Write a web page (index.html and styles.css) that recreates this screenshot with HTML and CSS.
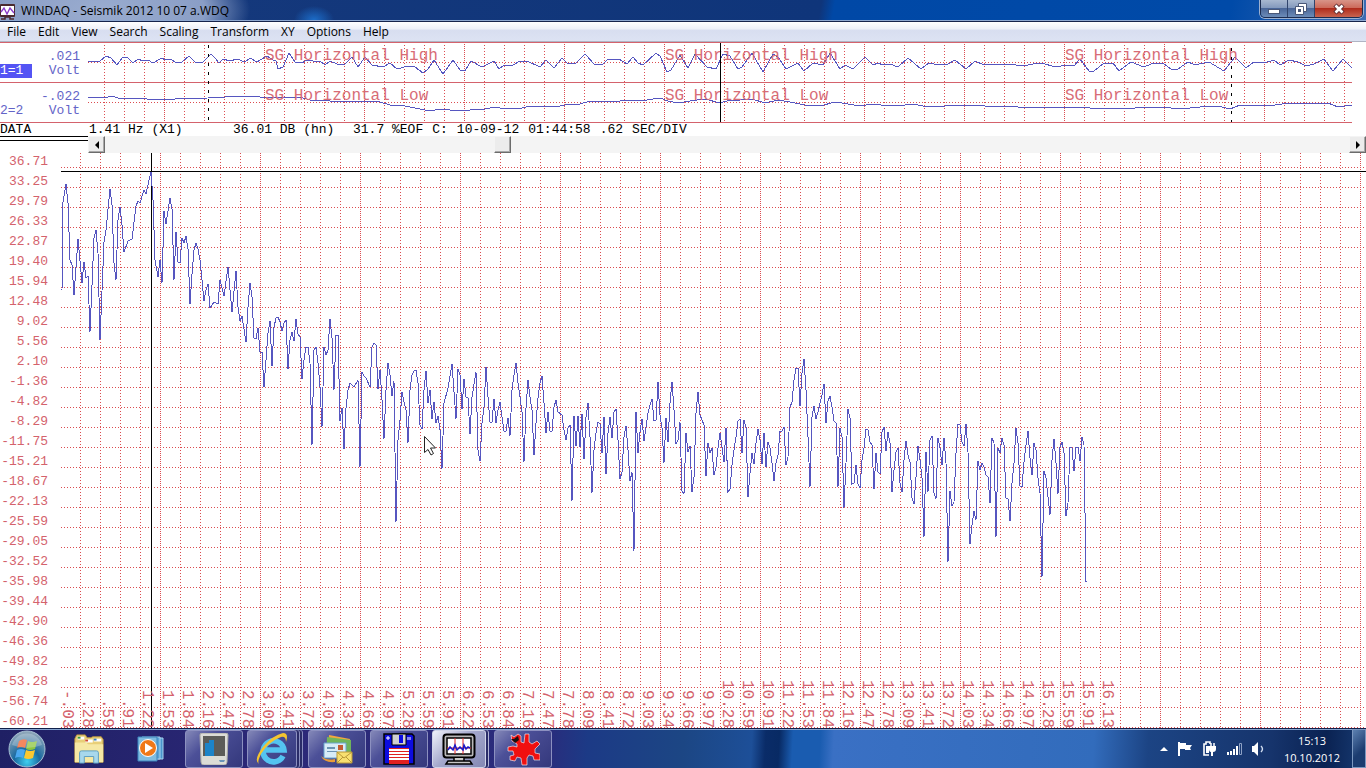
FILE: index.html
```
<!DOCTYPE html>
<html lang="en">
<head>
    <meta charset="UTF-8">
    <meta name="viewport" content="width=device-width, initial-scale=1.0">
    <title>WINDAQ - Seismik 2012 10 07 a.WDQ</title>
    <link rel="stylesheet" href="styles.css">
</head>
<body>

    <header class="title-bar">
        <svg class="app-icon" width="16" height="18" viewBox="0 0 16 18" aria-hidden="true">
            <rect x="0" y="2" width="15" height="13" rx="1" fill="#4a2a30"/>
            <rect x="1" y="4" width="13" height="9" fill="#fff"/>
            <path d="M1 10l3-4 3 6 3-6 4 5" fill="none" stroke="#8a3cc8" stroke-width="1.4"/>
            <path d="M1 17h4v-2h5v2h4" fill="none" stroke="#4a2a30" stroke-width="1.5"/>
        </svg>
        <h1 class="title-text">WINDAQ - Seismik 2012 10 07 a.WDQ</h1>
        <div class="window-controls">
            <button class="control" aria-label="Minimize">
                <svg width="12" height="12" viewBox="0 0 12 12"><rect x="0.5" y="6.500" width="11" height="4" fill="#fff" stroke="#4a5878"/></svg>
            </button>
            <button class="control" aria-label="Restore">
                <svg width="12" height="12" viewBox="0 0 12 12">
                    <path d="M3.500 .5h8v8h-8z" fill="#fff" stroke="#4a5878"/>
                    <path d="M.5 3.500h8v8h-8z" fill="#fff" stroke="#4a5878"/>
                    <rect x="3.500" y="6.500" width="2" height="2" fill="#4a5878" stroke="#4a5878"/>
                </svg>
            </button>
            <button class="control close" aria-label="Close">
                <svg width="12" height="12" viewBox="0 0 12 12">
                    <path d="M2 2l8 8M10 2l-8 8" stroke="#5a2a30" stroke-width="4.500"/>
                    <path d="M2.500 2.500l7 7M9.500 2.500l-7 7" stroke="#fff" stroke-width="2.600"/>
                </svg>
            </button>
        </div>
    </header>

    <nav class="menu-bar">
        <button>File</button>
        <button>Edit</button>
        <button>View</button>
        <button>Search</button>
        <button>Scaling</button>
        <button>Transform</button>
        <button>XY</button>
        <button>Options</button>
        <button>Help</button>
    </nav>

    <section class="strip">
        <div class="channels">
            <div class="channel">
                <span class="channel-id active">1=1</span>
                <span class="channel-value">.021<br>Volt</span>
            </div>
            <div class="channel">
                <span class="channel-id">2=2</span>
                <span class="channel-value">-.022<br>Volt</span>
            </div>
        </div>
        <svg class="strip-chart" role="img" aria-label="Waveforms of both channels">
            <defs>
                <pattern id="stripCols" x="64" y="42" width="100" height="12" patternUnits="userSpaceOnUse">
                    <path class="grid-major" d="M.5 0v12"/>
                    <path class="grid-minor" d="M20.500 0v12M40.500 0v12M60.500 0v12M80.500 0v12"/>
                </pattern>
                <pattern id="stripRows" x="88" y="62" width="60" height="40" patternUnits="userSpaceOnUse">
                    <path class="grid-minor" d="M0 .5h60"/>
                </pattern>
            </defs>
            <g transform="translate(-88 -42)">
                <rect x="88" y="42" width="100%" height="80" fill="url(#stripCols)"/>
                <rect x="88" y="42" width="100%" height="80" fill="url(#stripRows)"/>
                <g fill="#d4626c">
                    <rect x="88" y="42" width="100%" height="1"/>
                    <rect x="88" y="82" width="100%" height="1"/>
                    <rect x="88" y="122" width="100%" height="1"/>
                </g>
                <g class="trace">
                    <polyline points="88,61 100,61 106,56 111,58 117,65 123,57 128,58 133,63 138,59 143,61 148,60 153,63 162,58 165,60 170,59 177,63 182,62 189,56 195,62 203,62 211,54 215,58 219,63 223,59 230,61 237,59 245,62 250,58 257,62 267,56 273,60 276,61 278,69 283,67 289,53 295,62 302,63 307,60 313,61 320,61 325,65 330,61 337,64 345,64 352,57 358,67 365,57 372,65 383,67 390,63 397,69 408,66 415,67 423,73 428,69 434,60 443,74 453,60 460,70 465,71 471,61 482,67 488,64 494,61 499,69 504,65 513,65 520,61 527,61 540,67 546,60 554,68 562,58 567,63 575,64 585,54 595,65 603,64 608,59 619,59 627,64 633,57 638,63 643,65 656,53 660,56 667,72 671,70 680,55 688,68 695,54 707,67 716,69 723,54 730,56 738,69 742,67 752,53 763,72 773,54 778,57 786,69 798,63 804,71 813,63 823,65 830,53 840,69 845,65 853,69 865,57 873,65 878,63 883,65 890,64 898,67 908,58 921,69 929,63 934,64 948,64 955,60 966,69 975,61 984,65 996,64 1009,64 1023,66 1033,64 1041,63 1056,67 1066,65 1074,66 1080,59 1089,71 1094,71 1104,63 1113,63 1119,71 1131,62 1144,67 1151,64 1163,63 1171,69 1178,69 1188,62 1193,64 1199,64 1209,62 1224,71 1235,57 1246,68 1254,62 1264,63 1274,60 1280,65 1289,60 1298,62 1306,66 1314,64 1324,59 1333,71 1343,59 1352,68"/>
                    <polyline points="88,97 108,97 112,96 118,98 135,98 158,100 175,99 208,98 225,97 240,96 260,97 275,97 290,97 300,97 310,100 330,101 365,101 380,102 390,105 400,105 410,107 425,110 435,110 445,109 455,111 470,110 485,109 495,107 500,108 522,108 530,106 540,107 560,106 565,105 580,104 590,101 605,102 620,101 630,100 640,101 660,98 668,101 678,103 690,101 705,99 720,103 730,100 740,100 752,99 765,103 778,100 790,102 805,105 820,106 835,102 848,104 860,106 872,104 890,106 905,105 913,104 928,107 945,106 960,105 985,106 1005,106 1030,108 1045,107 1065,108 1085,107 1095,109 1112,108 1125,109 1145,107 1162,107 1180,109 1200,107 1218,106 1230,109 1240,105 1255,106 1275,105 1290,103 1318,104 1328,103 1338,107 1352,105"/>
                </g>
                <g class="strip-label">
                    <text x="265" y="60">SG Horizontal High</text>
                    <text x="665" y="60">SG Horizontal High</text>
                    <text x="1065" y="60">SG Horizontal High</text>
                    <text x="265" y="100">SG Horizontal Low</text>
                    <text x="665" y="100">SG Horizontal Low</text>
                    <text x="1065" y="100">SG Horizontal Low</text>
                </g>
                <rect x="720" y="43" width="1" height="79" fill="#000"/>
                <path d="M208.500 45v77M1231.500 48v74" stroke="#000" stroke-dasharray="3 6"/>
            </g>
        </svg>
    </section>

    <section class="status-row">
        <span class="status-mode">DATA</span>
        <span class="status-frequency">1.41 Hz (X1)</span>
        <span class="status-level">36.01 DB (hn)</span>
        <span>31.7 %EOF</span>
        <span>C:</span>
        <span>10-09-12</span>
        <span>01:44:58</span>
        <span>.62</span>
        <span>SEC/DIV</span>
    </section>

    <section class="scroll-row">
        <div class="rule"></div>
        <button class="scroll-button" aria-label="Scroll left">
            <svg width="6" height="8" viewBox="0 0 6 8"><path d="M5 0v8L1 4z" fill="#000"/></svg>
        </button>
        <input class="scroll-track" type="range" min="0" max="100" step="0.1" value="31.7" aria-label="File position">
        <button class="scroll-button" aria-label="Scroll right">
            <svg width="6" height="8" viewBox="0 0 6 8"><path d="M1 0v8l4-4z" fill="#000"/></svg>
        </button>
    </section>

    <main class="spectrum">
        <ol class="y-scale">
            <li>36.71</li>
            <li>33.25</li>
            <li>29.79</li>
            <li>26.33</li>
            <li>22.87</li>
            <li>19.40</li>
            <li>15.94</li>
            <li>12.48</li>
            <li>9.02</li>
            <li>5.56</li>
            <li>2.10</li>
            <li>-1.36</li>
            <li>-4.82</li>
            <li>-8.29</li>
            <li>-11.75</li>
            <li>-15.21</li>
            <li>-18.67</li>
            <li>-22.13</li>
            <li>-25.59</li>
            <li>-29.05</li>
            <li>-32.52</li>
            <li>-35.98</li>
            <li>-39.44</li>
            <li>-42.90</li>
            <li>-46.36</li>
            <li>-49.82</li>
            <li>-53.28</li>
            <li>-56.74</li>
            <li>-60.21</li>
        </ol>
        <div class="plot">
            <svg class="plot-chart" role="img" aria-label="Frequency spectrum in decibels">
                <defs>
                    <pattern id="plotCols" x="60" y="153" width="100" height="12" patternUnits="userSpaceOnUse">
                        <path class="grid-major" d="M.5 0v12"/>
                        <path class="grid-minor" d="M20.500 0v12M40.500 0v12M60.500 0v12M80.500 0v12"/>
                    </pattern>
                    <pattern id="plotRows" x="61" y="167" width="60" height="20" patternUnits="userSpaceOnUse">
                        <path class="grid-minor" d="M0 .5h60"/>
                    </pattern>
                </defs>
                <g transform="translate(-61 -153)">
                    <rect x="61" y="153" width="100%" height="100%" fill="url(#plotCols)"/>
                    <rect x="61" y="153" width="100%" height="100%" fill="url(#plotRows)"/>
                    <rect x="61" y="171" width="100%" height="1" fill="#000"/>
                    <rect x="151" y="153" width="1" height="100%" fill="#000"/>
                    <g class="trace">
                        <polyline points="62,290 63,202 66,184 68,203 70,260 72,265 74,295 78,239 82,283 84,262 86,278 88,276 90,332 94,238 96,230 98,253 100,340 104,242 106,230 110,189 112,205 114,263 116,280 118,220 120,207 122,225 124,252 128,241 132,239 136,206 138,201 140,203 144,190 146,194 149,180 151,172 153,200 155,260 158,277 160,260 162,283 164,211 166,224 170,198 172,209 174,280 176,232 178,262 180,263 182,238 184,243 186,236 188,249 190,304 192,274 194,250 196,243 198,249 200,260 202,280 204,301 206,290 208,284 210,308 214,302 218,304 220,280 224,296 228,267 232,312 236,271 238,307 240,321 242,316 246,342 248,307 250,283 252,297 254,338 256,339 258,328 260,352 262,352 264,387 266,360 268,333 270,321 272,366 274,327 276,318 278,317 280,322 282,331 284,323 286,320 288,369 290,340 292,332 294,341 296,319 298,334 300,337 302,379 304,360 306,347 308,347 310,363 312,445 314,350 316,347 318,363 320,387 322,427 324,347 326,355 328,350 330,319 332,338 334,390 336,335 338,335 340,421 342,408 344,449 346,408 348,390 350,383 354,387 358,380 360,467 362,372 364,376 366,378 370,387 372,347 374,343 376,345 378,389 380,370 382,400 384,439 386,390 388,363 390,375 392,396 394,381 396,522 398,440 400,420 402,392 404,402 406,410 408,443 410,390 412,375 414,371 416,370 418,383 420,425 422,429 424,390 426,371 428,403 430,390 432,419 434,402 436,423 438,416 440,430 442,469 444,403 448,388 452,364 456,419 458,369 460,375 462,409 464,379 466,397 468,398 470,434 472,397 476,372 478,450 480,461 482,423 484,407 486,367 488,397 490,422 492,422 494,399 496,423 498,410 500,402 502,417 504,431 506,431 508,418 510,436 512,390 514,375 516,363 518,383 520,397 522,412 524,462 526,408 528,380 530,397 532,410 534,455 536,423 538,398 540,383 542,376 544,403 546,433 548,412 550,431 552,431 554,407 556,400 558,412 562,415 564,430 566,440 568,428 570,425 572,501 574,416 576,446 578,416 580,447 582,414 584,459 586,417 588,403 590,437 592,493 594,450 596,433 598,422 600,424 602,453 604,417 606,474 608,433 610,417 612,438 614,412 616,409 618,440 620,479 622,472 624,437 626,426 628,450 630,481 632,472 634,551 636,412 638,453 640,432 642,419 644,441 646,427 648,413 650,405 652,399 654,421 656,420 658,382 660,415 662,428 664,463 666,418 668,442 670,403 672,382 674,410 676,444 678,440 680,422 682,491 684,494 686,433 688,452 690,446 692,492 694,477 696,413 698,392 700,415 704,425 706,476 708,443 710,453 712,448 714,475 716,467 718,448 720,433 722,447 724,462 726,428 728,492 730,489 732,465 734,450 736,437 738,421 740,419 742,453 744,420 746,427 748,497 750,473 752,453 754,464 756,443 758,429 760,440 762,464 764,433 766,467 768,442 770,448 772,463 774,481 776,463 778,455 780,431 782,431 784,427 786,465 788,457 790,407 792,402 794,380 796,368 798,368 800,406 802,373 804,359 806,390 808,437 810,487 812,417 814,406 816,419 818,412 820,403 822,395 824,384 826,423 828,401 830,396 832,407 834,421 836,423 838,487 840,428 842,437 844,508 846,463 848,409 850,418 852,484 854,483 856,465 858,484 860,488 862,460 864,448 866,429 868,430 870,442 872,445 874,489 876,453 878,472 880,474 882,432 884,427 886,451 888,432 890,443 892,492 894,470 896,452 898,448 900,483 902,492 904,460 906,441 908,455 910,462 912,498 914,504 916,477 918,446 920,460 922,478 924,537 926,452 928,492 930,440 932,436 934,493 936,499 938,438 940,448 942,465 944,438 946,463 948,562 950,491 952,506 954,502 956,453 958,424 960,425 962,442 964,446 966,424 968,452 970,544 972,525 974,511 976,520 978,461 980,470 982,463 984,467 986,475 988,477 990,503 992,438 994,443 996,537 998,448 1000,453 1002,438 1004,445 1006,498 1008,499 1010,521 1012,483 1014,463 1016,428 1018,443 1020,486 1022,487 1024,462 1026,445 1028,431 1030,458 1032,475 1034,443 1036,450 1038,478 1040,493 1042,577 1044,471 1046,478 1048,497 1050,515 1052,460 1054,439 1056,463 1058,494 1060,447 1062,442 1064,453 1066,516 1068,503 1070,447 1072,448 1074,471 1076,447 1078,447 1080,461 1082,437 1084,445 1085,513 1086,581 1087,581"/>
                    </g>
                    <!-- mouse pointer -->
                    <path d="M424.500 436.500v16l3.500-3 3 5.500 2.500-1.500-3-5.500h5z" fill="#fff" stroke="#222"/>
                </g>
            </svg>
            <ol class="x-scale">
                <li>-.03</li><li>.28</li><li>.59</li><li>.91</li>
                <li>1.22</li><li>1.53</li><li>1.84</li>
                <li>2.16</li><li>2.47</li><li>2.78</li>
                <li>3.09</li><li>3.41</li><li>3.72</li>
                <li>4.03</li><li>4.34</li><li>4.66</li><li>4.97</li>
                <li>5.28</li><li>5.59</li><li>5.91</li>
                <li>6.22</li><li>6.53</li><li>6.84</li>
                <li>7.16</li><li>7.47</li><li>7.78</li>
                <li>8.09</li><li>8.41</li><li>8.72</li>
                <li>9.03</li><li>9.34</li><li>9.66</li><li>9.97</li>
                <li>10.28</li><li>10.59</li><li>10.91</li>
                <li>11.22</li><li>11.53</li><li>11.84</li>
                <li>12.16</li><li>12.47</li><li>12.78</li>
                <li>13.09</li><li>13.41</li><li>13.72</li>
                <li>14.03</li><li>14.34</li><li>14.66</li><li>14.97</li>
                <li>15.28</li><li>15.59</li><li>15.91</li>
                <li>16.13</li>
            </ol>
        </div>
    </main>

    <footer class="taskbar">
        <button class="start" aria-label="Start">
            <svg width="38" height="38" viewBox="0 0 38 38">
                <defs>
                    <radialGradient id="orb" cx="50%" cy="85%" r="80%">
                        <stop offset="0" stop-color="#3fd0f0"/>
                        <stop offset=".45" stop-color="#1a6aa0"/>
                        <stop offset="1" stop-color="#8aa4b8"/>
                    </radialGradient>
                </defs>
                <circle cx="19" cy="19" r="18" fill="url(#orb)" stroke="#a8c0d4"/>
                <path d="M11 11q4-3 8-1l-2 8q-4-2-8 0z" fill="#f0602a"/>
                <path d="M20 11q4 2 9 0l-2 8q-5 2-9 0z" fill="#8cc63f"/>
                <path d="M9 20q4-2 8 0l-2 8q-4-2-8 0z" fill="#4aa8f0"/>
                <path d="M18 20q4 2 9 0l-2 8q-5 2-9 0z" fill="#fcc830"/>
                <path d="M4 15a15.500 15.500 0 0 1 30 0q-15 6-30 0z" fill="#fff" opacity=".25"/>
            </svg>
        </button>
        <div class="tasks">
            <button class="task pinned" aria-label="Explorer">
                <svg width="34" height="32" viewBox="0 0 34 32">
                    <path d="M2 5l2-4h9l2 3h4l2-1h9l2 3v24H2z" fill="#e8cf78" stroke="#b89440"/>
                    <path d="M5 3h7v3H5zM13 6h8v3h-8zM22 5h8v3h-8z" fill="#fff"/>
                    <path d="M5 3h3v2H5z" fill="#3a9a3a"/><path d="M13 6h3v2h-3z" fill="#d04830"/><path d="M22 5h3v2h-3z" fill="#3a80c0"/>
                    <path d="M2 9h12l2 2h16v19H2z" fill="#f6e8a4"/>
                    <path d="M7 31V20q0-2 2-2h16q2 0 2 2v11h-5v-7H12v7z" fill="#a8d8ec" stroke="#5a9cc0"/>
                </svg>
            </button>
            <button class="task pinned last" aria-label="Media Player">
                <svg width="28" height="28" viewBox="0 0 28 28">
                    <path d="M8 3h18v21H8z" fill="#4a94cc" stroke="#a8d4f0"/>
                    <path d="M5 2h18v22H5z" fill="#5aa4d8" stroke="#a8d4f0"/>
                    <path d="M1 2h19v24H1z" fill="#80bce0" stroke="#3a84bc"/>
                    <circle cx="11" cy="13" r="8.500" fill="#f07818" stroke="#fff"/>
                    <path d="M8 8v10l8-5z" fill="#fff"/>
                </svg>
            </button>
            <button class="task" aria-label="Monitor">
                <svg width="30" height="32" viewBox="0 0 30 32">
                    <path d="M1 2q0-2 2-2h24q2 0 2 2l-1 27q0 3-3 3H5q-3 0-3-3z" fill="#dcdcd6" stroke="#a8a8a4"/>
                    <path d="M4 3h22v20H4z" fill="#5c5c58"/>
                    <path d="M6 10h4v13H6zM10 7h5v16h-5z" fill="#1c84c8"/>
                    <path d="M20 27h6l-1 2h-4z" fill="#6a94b8"/>
                </svg>
            </button>
            <button class="task stacked" aria-label="Internet Explorer">
                <svg width="34" height="34" viewBox="0 0 34 34">
                    <path d="M28 24a10.500 10.500 0 1 1 1-6H10" fill="none" stroke="#54c4f0" stroke-width="5.500"/>
                    <path d="M4 32Q-2 28 8 15 18 3 28 1q6 0 3 9 0-6-5-5Q13 10 6 22q-4 8-2 10z" fill="#f4c430"/>
                </svg>
            </button>
            <button class="task" aria-label="Mail">
                <svg width="34" height="30" viewBox="0 0 34 30">
                    <path d="M9 1l21 4-2 14H8z" fill="#f4a83c"/>
                    <path d="M7 3l24 3v16H6z" fill="#70b45c"/>
                    <path d="M4 9h22v15H4z" fill="#d8ecf8" stroke="#6aa4cc"/>
                    <path d="M18 11h5v5h-5z" fill="#c45c34"/><path d="M7 13h8v2H7zM7 17h10v1H7z" fill="#6c94b4"/>
                    <path d="M1 22q5 5 14 3v3Q4 29 1 22z" fill="#e89c38"/>
                    <path d="M17 18h15v11H17z" fill="#f8e070" stroke="#b89838"/>
                    <path d="M17 18l7 6 8-6M17 29l6-6M32 29l-6-6" fill="none" stroke="#b89838"/>
                </svg>
            </button>
            <button class="task" aria-label="Disk tool">
                <svg width="32" height="32" viewBox="0 0 32 32">
                    <path d="M1 1h28l2 2v28H1z" fill="#0c0ce0" stroke="#000" stroke-width="1.500"/>
                    <path d="M9 1h14v11H9z" fill="#d0d0d0" stroke="#000"/><path d="M16 2h4v8h-4z" fill="#0c0ce0"/>
                    <path d="M6 15h20v16H6z" fill="#fff"/>
                    <path d="M6 15h20v1H6zM6 18h20v1H6zM6 21h20v1H6zM6 24h20v1H6zM6 27h20v4H6z" fill="#e02020"/>
                    <path d="M3 5h4M5 3v4M25 4v3M27 4v3" stroke="#fff"/>
                </svg>
            </button>
            <button class="task stacked active" aria-label="WINDAQ">
                <svg width="34" height="32" viewBox="0 0 34 32">
                    <rect x="1.500" y="1.500" width="31" height="23" rx="3" fill="#b8b8b8" stroke="#000" stroke-width="2"/>
                    <rect x="5" y="5" width="24" height="16" fill="#fff" stroke="#000" stroke-width="1.500"/>
                    <path d="M13 5v16M21 5v16M5 15h24" stroke="#e02828"/>
                    <path d="M6 17l2-3 3 3 2-5 2 5 3-3 3 3 1-5 2 4 2-2 2 1" fill="none" stroke="#1818c8" stroke-width="1.500"/>
                    <path d="M12 25v3h10v-3M4 31l2-3h22l2 3z" fill="#c8c8c8" stroke="#000" stroke-width="1.500"/>
                </svg>
            </button>
            <button class="task" aria-label="Splat">
                <svg width="34" height="34" viewBox="0 0 34 34">
                    <path d="M5 3l3 2 4-3 3 2 0 6 3 1 1-9 4 0 0 8 3 2 5-3 3 3-5 5 0 4 5 1 0 6-6 0-1-4-4-1-2 3 0 7-5 0-1-7-4-1-2 4-5-1 0-4 4-1-1-4-5 0 0-4 5-1 4 1 0-3-5-3z" fill="#f01010" stroke="#fff" stroke-width=".6"/>
                    <path d="M5 7l3 0 4-3 1 4-4 3z" fill="#181010"/>
                </svg>
            </button>
        </div>
        <div class="tray">
            <svg width="8" height="5" viewBox="0 0 8 5"><path d="M0 5l4-4 4 4z" fill="#fff"/></svg>
            <svg width="16" height="16" viewBox="0 0 16 16"><path d="M2 1v14" stroke="#fff" stroke-width="2"/><path d="M3 2h6v2h6l-2 3 1 2H8V8H3z" fill="#fff"/></svg>
            <svg width="15" height="16" viewBox="0 0 15 16">
                <path d="M7 14H2V3h2V1h4v2" fill="none" stroke="#fff" stroke-width="1.600"/>
                <path d="M4 5h3v7H4z" fill="#fff"/>
                <path d="M9 2v3M12 2v3" stroke="#fff" stroke-width="1.500"/>
                <path d="M7 5h7v3q0 3-3 3v4H9v-4q-2 0-2-3z" fill="#fff"/>
            </svg>
            <svg width="16" height="12" viewBox="0 0 16 12"><path d="M1 9h2v3H1zM4 8h2v4H4zM7 6h2v6H7zM10 3h2v9h-2z" fill="#fff"/><path d="M13.500.5h2v11h-2z" fill="none" stroke="#8ca0c4"/></svg>
            <svg width="14" height="14" viewBox="0 0 14 14"><path d="M1 4h2l4-4v14l-4-4H1z" fill="#fff"/><path d="M10 4q3 3 0 6" fill="none" stroke="#d0dcf0" stroke-width="1.400"/></svg>
        </div>
        <div class="clock">15:13<br>10.10.2012</div>
        <button class="show-desktop" aria-label="Show desktop"></button>
    </footer>

</body>
</html>
```
FILE: styles.css
```
* {
    box-sizing: border-box;
}

body {
    display: flex;
    flex-direction: column;
    height: 100vh;
    margin: 0;
    overflow: hidden;
    background-color: #fff;
    font-family: "Open Sans", "Noto Sans", sans-serif;
    font-size: 12px;
}

button {
    margin: 0;
    padding: 0;
    border: none;
    background: none;
    font: inherit;
}

svg {
    display: block;
}

ol {
    margin: 0;
    padding: 0;
    list-style: none;
}

/* title bar */

.title-bar {
    display: flex;
    align-items: flex-start;
    height: 22px;
    border-bottom: 1px solid #16244c;
    box-shadow: inset 0 -1px #8ea8d0;
    background:
        radial-gradient(20px 14px at 314px 20px, #1c6cc8, transparent),
        radial-gradient(150px 60px at 100px 10px, #9aaccf 0, #8a9ec6 70%, transparent 100%),
        linear-gradient(100deg, #16397c 0, #0f357a 60%, #0048a6 61%, #004aa8 90%, #3c6cb4 100%);
}

.title-text {
    flex: 1;
    margin: 0 0 0 5px;
    font-size: 12px;
    font-weight: normal;
    line-height: 21px;
    color: #000;
}

.app-icon {
    margin-top: 2px;
}

.window-controls {
    display: flex;
    height: 18px;
    margin-right: 3px;
    border: 1px solid #1c2c50;
    border-top: none;
    border-radius: 0 0 5px 5px;
    overflow: hidden;
    box-shadow: 0 0 0 1px #9cb0d0;
}

.control {
    display: flex;
    justify-content: center;
    align-items: center;
    width: 27px;
    border-right: 1px solid #30446c;
    background: linear-gradient(#a8b8d0 0, #8298bc 48%, #4a6698 50%, #6c8cb8 100%);
}

.control.close {
    width: 47px;
    border-right: none;
    background: linear-gradient(#d89488 0, #cc6858 48%, #b02c1c 50%, #c86450 100%);
}

/* menu */

.menu-bar {
    display: flex;
    height: 20px;
    padding-left: 1px;
    border-bottom: 1px solid #b0b4c4;
    background: linear-gradient(#fff 0, #eef1f9 35%, #d8def0 45%, #dde3f3 100%);
}

.menu-bar button {
    padding: 0 6px;
    line-height: 18px;
    color: #000;
}

/* waveform strip */

.strip,
.status-row,
.spectrum {
    font-family: "Liberation Mono", monospace;
    font-size: 13px;
}

.strip {
    display: flex;
    height: 81px;
}

.channels {
    width: 88px;
    border-top: 1px solid #d4626c;
    background: linear-gradient(#d4626c, #d4626c) 0 39px / 100% 1px no-repeat,
        linear-gradient(#d4626c, #d4626c) 0 79px / 100% 1px no-repeat;
}

.channel {
    display: flex;
    justify-content: space-between;
    align-items: flex-end;
    height: 40px;
    padding: 0 8px 5px 0;
    line-height: 14px;
    color: #6464c8;
}

.channel-id {
    width: 32px;
}

.channel-id.active {
    background-color: #5454f4;
    color: #fff;
}

.channel-value {
    text-align: right;
}

.strip-chart {
    flex: 1;
    min-width: 0;
    height: 81px;
    margin-right: 14px;
}

.strip-label {
    fill: #d86c76;
    font-size: 16px;
}

.grid-major,
.grid-minor {
    fill: none;
    stroke: #dc4c50;
    stroke-width: 1;
    shape-rendering: crispEdges;
}

.grid-major {
    stroke-dasharray: 1 1;
}

.grid-minor {
    stroke-dasharray: 1 2;
}

.trace {
    fill: none;
    stroke: #5656c0;
    stroke-width: 1;
    shape-rendering: crispEdges;
}

/* status line */

.status-row {
    display: flex;
    gap: 9px;
    line-height: 13px;
    white-space: nowrap;
    color: #000;
}

.status-mode {
    width: 80px;
}

.status-frequency {
    width: 135px;
}

.status-level {
    width: 111px;
}

.scroll-row {
    display: flex;
    height: 17px;
}

.rule {
    width: 88px;
    height: 5px;
    border-top: 1px solid #000;
    border-bottom: 1px solid #000;
}

.scroll-button {
    display: flex;
    justify-content: center;
    align-items: center;
    width: 17px;
    border: 1px solid;
    border-color: #f4f4f4 #6c6c6c #6c6c6c #f4f4f4;
    background-color: #ececec;
    box-shadow: inset -1px -1px #a8a8a8;
}

.scroll-track {
    flex: 1;
    min-width: 0;
    height: 17px;
    margin: 0;
    background-color: #f4f4f4;
    appearance: none;
}

.scroll-track::-webkit-slider-thumb {
    width: 17px;
    height: 17px;
    border: 1px solid;
    border-color: #f4f4f4 #6c6c6c #6c6c6c #f4f4f4;
    background-color: #ececec;
    box-shadow: inset -1px -1px #a8a8a8;
    appearance: none;
}

/* spectrum */

.spectrum {
    display: flex;
    flex: 1;
    min-height: 0;
    color: #d4626c;
}

.y-scale {
    width: 61px;
    padding-right: 13px;
    line-height: 18px;
    text-align: right;
}

.y-scale li {
    height: 20px;
}

.y-scale li:last-child {
    height: 14px;
}

.plot {
    display: grid;
    grid-template: 100% / 100%;
    flex: 1;
    min-width: 0;
}

.plot-chart,
.x-scale {
    grid-area: 1 / 1;
}

.plot-chart {
    width: 100%;
    height: 100%;
}

.x-scale {
    display: flex;
    align-self: end;
    align-items: flex-end;
    font-size: 16px;
}

.x-scale li {
    flex: none;
    width: 20px;
    padding-right: 9px;
    line-height: 11px;
    writing-mode: vertical-rl;
}

/* taskbar */

.taskbar {
    display: flex;
    align-items: center;
    height: 40px;
    border-top: 1px solid #10204a;
    box-shadow: inset 0 1px #86a4d0;
    background: linear-gradient(93deg, #1f2064 0, #2c2878 20%, #2a2c7c 40%, #1c3a86 43%, #1c4684 50%, #1d4f98 55%, #0a2c68 56%, #082a64 57%, #1a5cb0 58%, #1a5cb0 60%, #3a70c4 61%, #326cbc 80%, #1c4484 84%, #16346c 93%, #0a2252 97%, #183c74 100%);
}

.start {
    margin: 0 27px 0 8px;
}

.tasks {
    display: flex;
    flex: 1;
    gap: 4px;
}

.task {
    display: flex;
    justify-content: center;
    align-items: center;
    width: 58px;
    height: 38px;
    border: 1px solid #8c90c0;
    border-radius: 3px;
    background: linear-gradient(135deg, #8488b8 0, #4c5098 35%, #34387c 100%);
}

.task.pinned {
    width: 32px;
    margin-right: 26px;
    border: none;
    background: none;
}

.task.pinned.last {
    margin-right: 14px;
}

.task.stacked {
    width: 50px;
    margin-right: 7px;
    box-shadow: 2px 0 #2a2c68, 3px 0 #8c90c0, 5px 0 #2a2c68, 6px 0 #8c90c0;
}

.task.active {
    width: 54px;
    margin-right: 4px;
    border-color: #d0d4e8;
    background: linear-gradient(135deg, #f0f2fa 0, #a4a8cc 45%, #8488b4 100%);
    box-shadow: 2px 0 #2a2c68, 3px 0 #b0b4d4;
}

.tray {
    display: flex;
    align-items: center;
    gap: 9px;
    margin-right: 19px;
}

.clock {
    margin-right: 12px;
    font-size: 11px;
    line-height: 17px;
    text-align: center;
    color: #fff;
}

.show-desktop {
    align-self: stretch;
    width: 14px;
    border: 1px solid #7c98c0;
    background: linear-gradient(135deg, #5c80b0 0, #1c3c70 60%);
}
```
